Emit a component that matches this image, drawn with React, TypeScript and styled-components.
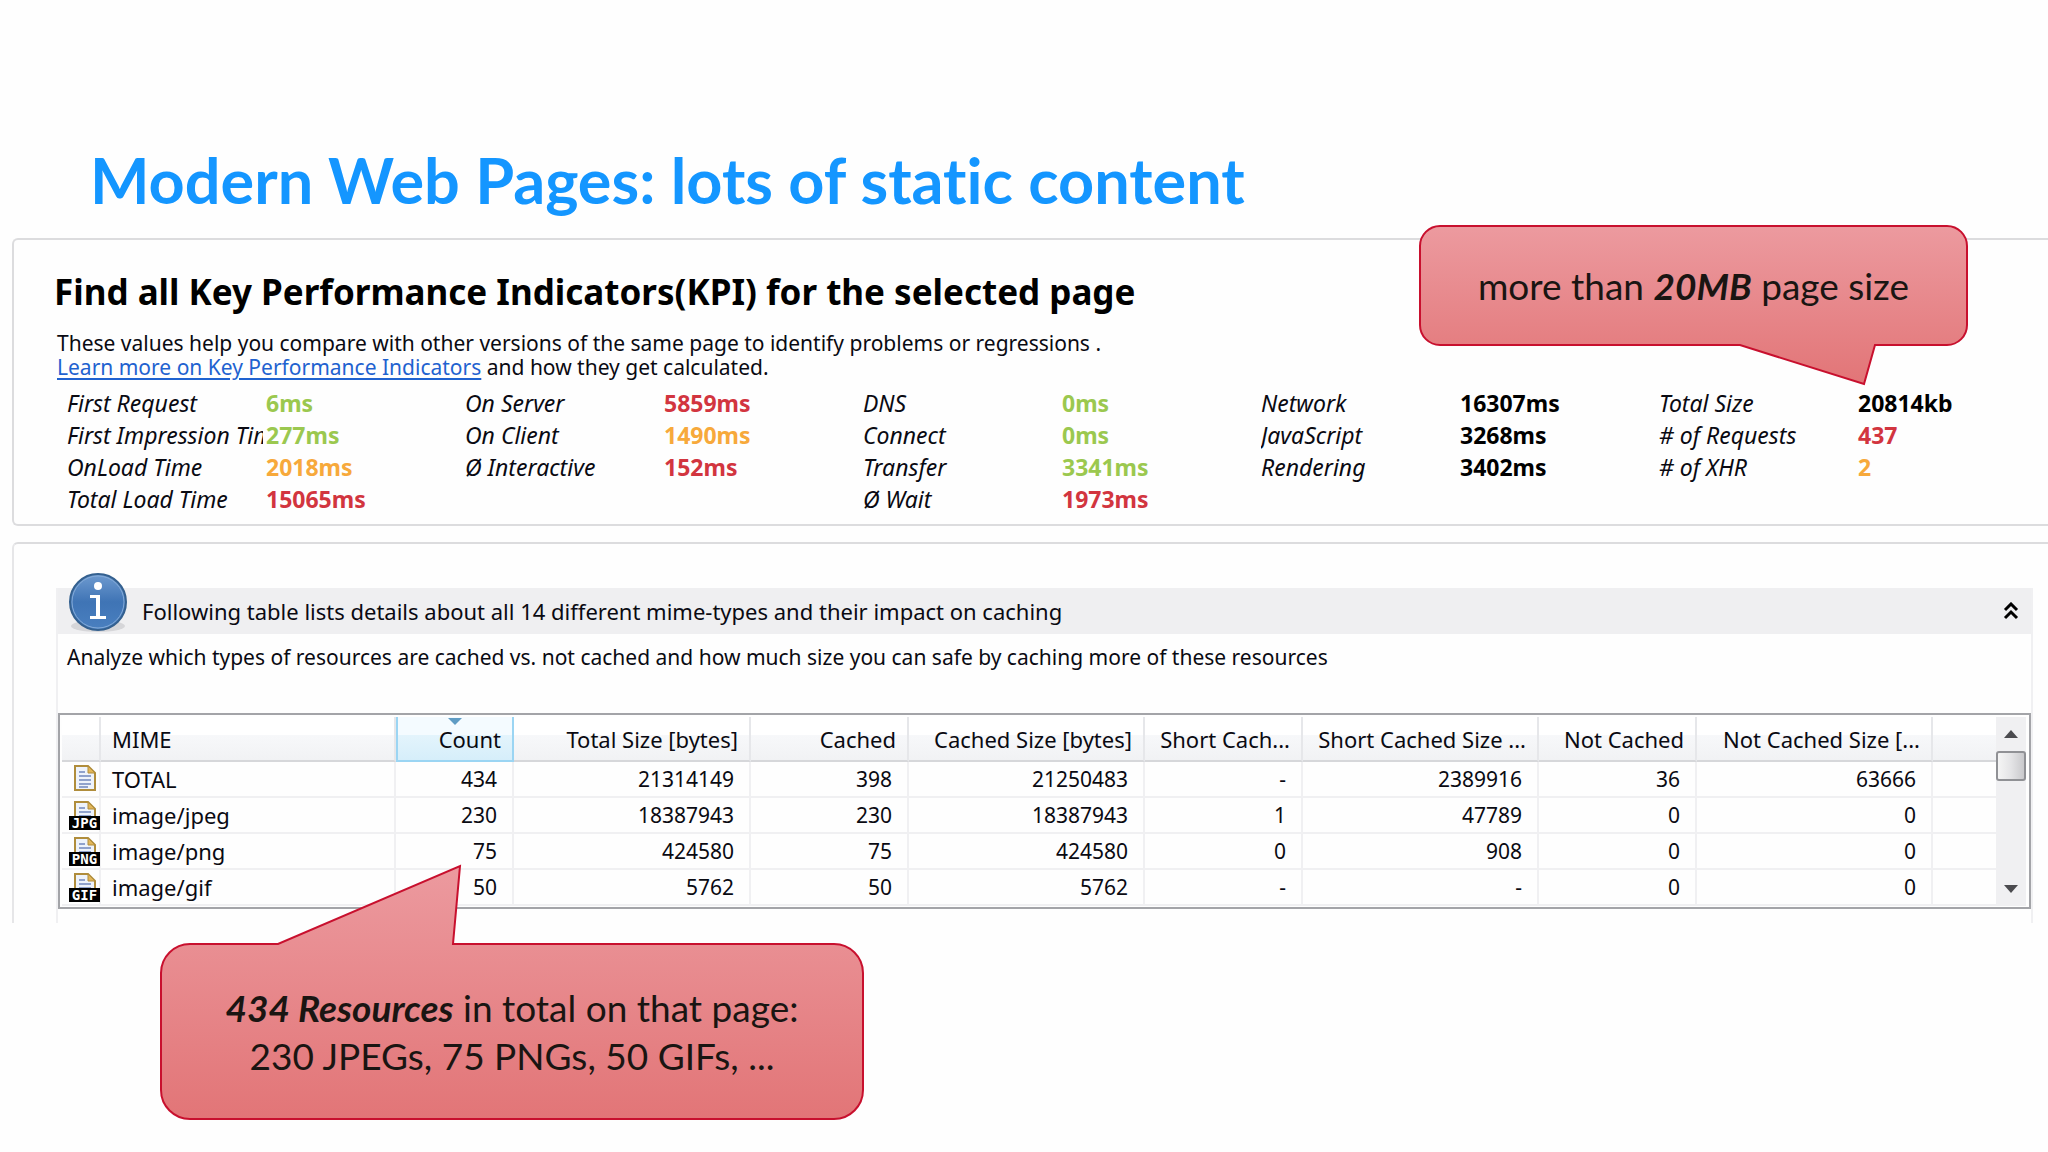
import React from "react";
import styled, { createGlobalStyle, css } from "styled-components";

const GlobalStyle = createGlobalStyle`
  *, *::before, *::after { box-sizing: border-box; }
  html, body { margin: 0; background: #fefefe; }
  body { font-family: "Noto Sans", "Open Sans", sans-serif; color: #0a0a12; overflow-x: hidden; }
  button { font: inherit; color: inherit; background: none; border: 0; padding: 0; cursor: pointer; }
  table { border-collapse: separate; border-spacing: 0; }
  h1, h2, p, dl, dd { margin: 0; }
`;

const Slide = styled.main`
  position: relative;
  min-height: 100vh;
  padding: 140px 0 0 12px;
`;

const Title = styled.h1`
  padding-left: 78px;
  font: 700 63px/80px Lato, "Open Sans", sans-serif;
  font-variant-ligatures: none;
  color: #1496ff;
`;

const Panel = styled.section<{ $open?: boolean }>`
  position: relative;
  border: 2px solid #dcdcde;
  border-right: 0;
  border-radius: 6px 0 0 6px;
  ${(p) =>
    p.$open &&
    css`
      border-bottom: 0;
      border-bottom-left-radius: 0;
    `}
`;

const KpiPanel = styled(Panel)`
  margin-top: 18px;
  padding: 30px 0 9px 40px;
`;

const PanelTitle = styled.h2`
  font-size: 35px;
  line-height: 44px;
  font-weight: 700;
  color: #000;
`;

const Intro = styled.p`
  margin-top: 17px;
  padding-left: 3px;
  font-size: 21px;
  line-height: 24px;
`;

const DocLink = styled.a`
  color: #1f62d0;
  text-decoration: underline;
  text-decoration-thickness: 2px;
  text-underline-offset: 3px;
`;

const KpiGrid = styled.div`
  display: grid;
  grid-template-columns: repeat(4, minmax(0, 398px)) 1fr;
  margin-top: 8px;
  padding-left: 13px;
`;

const KpiList = styled.dl`
  display: grid;
  grid-template-columns: 199px 1fr;
  grid-auto-rows: 32px;
  align-content: start;
  line-height: 32px;
`;

const KpiLabel = styled.dt`
  margin-right: 3px;
  overflow: hidden;
  white-space: nowrap;
  font-size: 23px;
  font-style: italic;
`;

type Tone = "good" | "warn" | "bad" | "plain";
const toneColor: Record<Tone, string> = {
  good: "#9bc84f",
  warn: "#f7a93b",
  bad: "#d2353f",
  plain: "#000",
};

const KpiValue = styled.dd<{ $tone: Tone }>`
  font-size: 23px;
  font-weight: 700;
  color: ${(p) => toneColor[p.$tone]};
`;

const CachePanel = styled(Panel)`
  margin-top: 16px;
  padding: 44px 15px 0 42px;
  border-left-color: #e6e6e8;
`;

const Section = styled.div`
  border: 2px solid #f0f0f2;
  border-width: 0 2px;
  padding-bottom: 14px;
`;

const SectionBar = styled.header`
  position: relative;
  display: flex;
  align-items: center;
  justify-content: space-between;
  height: 46px;
  padding: 0 12px 0 84px;
  background: #efeff1;
  font-size: 22px;
`;

const InfoBadge = styled.svg`
  position: absolute;
  left: 10px;
  bottom: 0;
  width: 60px;
  height: 62px;
`;

const CollapseButton = styled.button`
  display: grid;
  place-items: center;
  width: 16px;
  height: 20px;
`;

const SectionText = styled.p`
  padding: 9px 9px 0;
  font-size: 21px;
  line-height: 28px;
`;

const TableFrame = styled.div`
  display: flex;
  margin-top: 42px;
  padding: 2px 3px 1px 2px;
  border: 2px solid #a3a4a8;
`;

const MimeTable = styled.table`
  flex: 1;
  width: 0;
  table-layout: fixed;
  font-size: 21px;
`;

const HeadCell = styled.th<{ $sorted?: boolean; $left?: boolean }>`
  position: relative;
  height: 45px;
  padding: 0 11px;
  border-right: 2px solid #e6e7ea;
  border-bottom: 2px solid #d6d7da;
  background: linear-gradient(#fff 0 42%, #f7f8fa 42%, #f1f2f4 100%);
  font-size: 22px;
  font-weight: 400;
  line-height: 40px;
  text-align: ${(p) => (p.$left ? "left" : "right")};
  white-space: nowrap;
  &:last-child {
    border-right: 0;
  }
  ${(p) =>
    p.$sorted &&
    css`
      border-color: #9bd5f3;
      border-left: 2px solid #9bd5f3;
      background: linear-gradient(#f4fbff 0 42%, #e3f4fc 42%, #d6eefa 100%);
    `}
`;

const SortMark = styled.svg`
  position: absolute;
  top: 1px;
  left: calc(50% - 8px);
  width: 16px;
  height: 8px;
`;

const Cell = styled.td<{ $left?: boolean }>`
  height: 36px;
  padding: 0 ${(p) => (p.$left ? 11 : 15)}px;
  border-right: 2px solid #f0f0f2;
  border-bottom: 2px solid #f0f0f2;
  font-size: ${(p) => (p.$left ? 22 : 21)}px;
  line-height: 34px;
  text-align: ${(p) => (p.$left ? "left" : "right")};
  white-space: nowrap;
  &:last-child {
    border-right: 0;
  }
`;

const IconCell = styled(Cell)`
  padding: 0 0 0 7px;
  line-height: 0;
`;

const FileIcon = styled.span`
  position: relative;
  display: flex;
  justify-content: center;
  width: 31px;
  height: 30px;
`;

const FileTag = styled.span`
  position: absolute;
  left: 0;
  right: 0;
  bottom: 0;
  height: 14px;
  background: #000;
  color: #fff;
  font: 700 14px/14px "DejaVu Sans Mono", monospace;
  text-align: center;
`;

const ScrollBar = styled.div`
  display: flex;
  flex-direction: column;
  width: 30px;
  background: #f0f0f2;
`;

const ScrollButton = styled.button`
  display: grid;
  place-items: center;
  height: 34px;
`;

const ScrollThumb = styled.div`
  height: 30px;
  border: 2px solid #909195;
  border-radius: 3px;
  background: linear-gradient(90deg, #f5f5f5, #e4e4e6 50%, #c9c9cc);
`;

const ScrollTrack = styled.div`
  flex: 1;
`;

const Callout = styled.aside<{ $w: number; $h: number }>`
  position: absolute;
  z-index: 2;
  display: flex;
  align-items: center;
  justify-content: center;
  width: ${(p) => p.$w}px;
  height: ${(p) => p.$h}px;
  font: 400 37px/48px Lato, "Open Sans", sans-serif;
  text-align: center;
  color: #1a1512;
`;

const SizeCallout = styled(Callout)`
  top: -15px;
  right: 80px;
`;

const CountCallout = styled(Callout)`
  top: 399px;
  left: 146px;
`;

const Bubble = styled.svg`
  position: absolute;
  left: 0;
  top: 0;
  overflow: visible;
`;

const CalloutText = styled.p`
  position: relative;
  white-space: nowrap;
`;

interface Kpi {
  label: string;
  value: string;
  tone: Tone;
}
const k = (label: string, value: string, tone: Tone): Kpi => ({ label, value, tone });

const kpis: Kpi[][] = [
  [
    k("First Request", "6ms", "good"),
    k("First Impression Time", "277ms", "good"),
    k("OnLoad Time", "2018ms", "warn"),
    k("Total Load Time", "15065ms", "bad"),
  ],
  [k("On Server", "5859ms", "bad"), k("On Client", "1490ms", "warn"), k("Ø Interactive", "152ms", "bad")],
  [
    k("DNS", "0ms", "good"),
    k("Connect", "0ms", "good"),
    k("Transfer", "3341ms", "good"),
    k("Ø Wait", "1973ms", "bad"),
  ],
  [k("Network", "16307ms", "plain"), k("JavaScript", "3268ms", "plain"), k("Rendering", "3402ms", "plain")],
  [k("Total Size", "20814kb", "plain"), k("# of Requests", "437", "bad"), k("# of XHR", "2", "warn")],
];

const columns = [
  { title: "", width: 39 },
  { title: "MIME", width: 295 },
  { title: "Count", width: 118 },
  { title: "Total Size [bytes]", width: 237 },
  { title: "Cached", width: 158 },
  { title: "Cached Size [bytes]", width: 236 },
  { title: "Short Cach...", width: 158 },
  { title: "Short Cached Size ...", width: 236 },
  { title: "Not Cached", width: 158 },
  { title: "Not Cached Size [...", width: 236 },
  { title: "" },
];

const rows = [
  { tag: "", cells: ["TOTAL", "434", "21314149", "398", "21250483", "-", "2389916", "36", "63666"] },
  { tag: "JPG", cells: ["image/jpeg", "230", "18387943", "230", "18387943", "1", "47789", "0", "0"] },
  { tag: "PNG", cells: ["image/png", "75", "424580", "75", "424580", "0", "908", "0", "0"] },
  { tag: "GIF", cells: ["image/gif", "50", "5762", "50", "5762", "-", "-", "0", "0"] },
];

function InfoIcon() {
  return (
    <InfoBadge viewBox="0 0 60 62" aria-hidden="true">
      <defs>
        <linearGradient id="info" x1="0" y1="0" x2="0" y2="1">
          <stop offset="0" stopColor="#6f9bd0" />
          <stop offset="0.5" stopColor="#3f74b5" />
          <stop offset="1" stopColor="#4a80c0" />
        </linearGradient>
      </defs>
      <ellipse cx="30" cy="54" rx="27" ry="6" fill="#d6d6d9" />
      <circle cx="30" cy="30" r="28" fill="url(#info)" stroke="#34608f" strokeWidth="2" />
      <circle cx="30" cy="30" r="26" fill="none" stroke="#85abd8" strokeWidth="1" />
      <circle cx="30" cy="14" r="4" fill="#fff" />
      <path d="M22 23h10v21h6v3h-16v-3h6v-18h-6z" fill="#fff" />
    </InfoBadge>
  );
}

function MimeIcon({ tag }: { tag: string }) {
  return (
    <FileIcon>
      <svg width="24" height="28" viewBox="0 0 24 28" aria-hidden="true">
        <path d="M2 2h13l7 7v17H2z" fill="#eef3fb" stroke="#b08d3c" strokeWidth="2" />
        <path d="M15 2v7h7z" fill="#e2b659" stroke="#b08d3c" strokeWidth="1" />
        <path d="M6 8h6M6 12h12M6 16h12M6 20h12M6 23h9" stroke="#7288bd" strokeWidth="1.500" />
      </svg>
      {tag && <FileTag>{tag}</FileTag>}
    </FileIcon>
  );
}

function BubbleShape({ id, w, h, d }: { id: string; w: number; h: number; d: string }) {
  return (
    <Bubble width={w} height={h} aria-hidden="true">
      <defs>
        <linearGradient id={id} x1="0" y1="0" x2="0" y2="1">
          <stop offset="0" stopColor="#ec9a9f" />
          <stop offset="1" stopColor="#e27577" />
        </linearGradient>
      </defs>
      <path d={d} fill={`url(#${id})`} stroke="#c8102e" strokeWidth="2" />
    </Bubble>
  );
}

export default function App() {
  return (
    <Slide>
      <GlobalStyle />
      <Title>Modern Web Pages: lots of static content</Title>

      <KpiPanel>
        <PanelTitle>Find all Key Performance Indicators(KPI) for the selected page</PanelTitle>
        <Intro>
          These values help you compare with other versions of the same page to identify problems or regressions .
          <br />
          <DocLink href="#kpi">Learn more on Key Performance Indicators</DocLink> and how they get calculated.
        </Intro>
        <KpiGrid>
          {kpis.map((group, i) => (
            <KpiList key={i}>
              {group.map((item) => (
                <React.Fragment key={item.label}>
                  <KpiLabel>{item.label}</KpiLabel>
                  <KpiValue $tone={item.tone}>{item.value}</KpiValue>
                </React.Fragment>
              ))}
            </KpiList>
          ))}
        </KpiGrid>
        <SizeCallout $w={549} $h={121}>
          <BubbleShape
            id="size-fill"
            w={549}
            h={160}
            d="M21 1H528A20 20 0 0 1 548 21V100A20 20 0 0 1 528 120H456L445 159L321 120H21A20 20 0 0 1 1 100V21A20 20 0 0 1 21 1Z"
          />
          <CalloutText>
            more than <strong><em>20MB</em></strong> page size
          </CalloutText>
        </SizeCallout>
      </KpiPanel>

      <CachePanel $open>
        <Section>
          <SectionBar>
            <InfoIcon />
            Following table lists details about all 14 different mime-types and their impact on caching
            <CollapseButton aria-label="Collapse section">
              <svg width="16" height="18" viewBox="0 0 16 18" fill="none" stroke="#000" strokeWidth="3">
                <path d="M2 8l6-6 6 6M2 16l6-6 6 6" />
              </svg>
            </CollapseButton>
          </SectionBar>
          <SectionText>
            Analyze which types of resources are cached vs. not cached and how much size you can safe by caching more of
            these resources
          </SectionText>
          <TableFrame>
            <MimeTable>
              <colgroup>
                {columns.map((c, i) => (
                  <col key={i} width={c.width} />
                ))}
              </colgroup>
              <thead>
                <tr>
                  {columns.map((c, i) => (
                    <HeadCell
                      key={i}
                      $left={i === 1}
                      $sorted={c.title === "Count"}
                      aria-sort={c.title === "Count" ? "descending" : undefined}
                    >
                      {c.title === "Count" && (
                        <SortMark viewBox="0 0 16 8" aria-hidden="true">
                          <path d="M1 0h14L8 7z" fill="#5f9cc4" />
                        </SortMark>
                      )}
                      {c.title && <button>{c.title}</button>}
                    </HeadCell>
                  ))}
                </tr>
              </thead>
              <tbody>
                {rows.map((r) => (
                  <tr key={r.cells[0]}>
                    <IconCell>
                      <MimeIcon tag={r.tag} />
                    </IconCell>
                    {r.cells.map((value, i) => (
                      <Cell key={i} $left={i === 0}>
                        {value}
                      </Cell>
                    ))}
                    <Cell />
                  </tr>
                ))}
              </tbody>
            </MimeTable>
            <ScrollBar>
              <ScrollButton aria-label="Scroll up">
                <svg width="14" height="8" viewBox="0 0 14 8">
                  <path d="M0 8l7-8 7 8z" fill="#4b4b4f" />
                </svg>
              </ScrollButton>
              <ScrollThumb />
              <ScrollTrack />
              <ScrollButton aria-label="Scroll down">
                <svg width="14" height="8" viewBox="0 0 14 8">
                  <path d="M0 0l7 8 7-8z" fill="#4b4b4f" />
                </svg>
              </ScrollButton>
            </ScrollBar>
          </TableFrame>
        </Section>
        <CountCallout $w={704} $h={177}>
          <BubbleShape
            id="count-fill"
            w={704}
            h={177}
            d="M30 1H118L300 -77L293 1H674A29 29 0 0 1 703 30V147A29 29 0 0 1 674 176H30A29 29 0 0 1 1 147V30A29 29 0 0 1 30 1Z"
          />
          <CalloutText>
            <strong><em>434 Resources</em></strong> in total on that page:
            <br />
            230 JPEGs, 75 PNGs, 50 GIFs, ...
          </CalloutText>
        </CountCallout>
      </CachePanel>
    </Slide>
  );
}
